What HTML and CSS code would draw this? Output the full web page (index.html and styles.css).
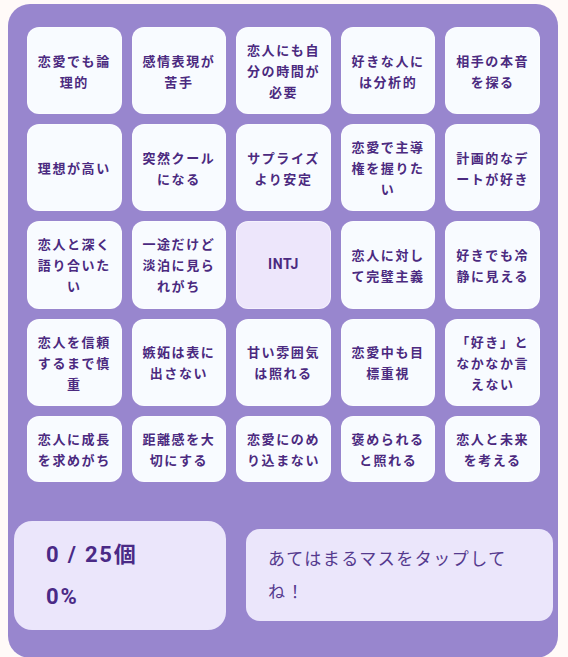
FILE: index.html
```html
<!DOCTYPE html>
<html lang="ja">
<head>
<meta charset="utf-8">
<title>INTJ 恋愛ビンゴ</title>
<link rel="stylesheet" href="styles.css">
</head>
<body>
<div class="board">
  <div class="grid">
    <div class="cell">恋愛でも論理的</div>
    <div class="cell">感情表現が苦手</div>
    <div class="cell">恋人にも自分の時間が必要</div>
    <div class="cell">好きな人には分析的</div>
    <div class="cell">相手の本音を探る</div>
    <div class="cell">理想が高い</div>
    <div class="cell">突然クールになる</div>
    <div class="cell">サプライズより安定</div>
    <div class="cell">恋愛で主導権を握りたい</div>
    <div class="cell">計画的なデートが好き</div>
    <div class="cell">恋人と深く語り合いたい</div>
    <div class="cell">一途だけど淡泊に見られがち</div>
    <div class="cell center">INTJ</div>
    <div class="cell">恋人に対して完璧主義</div>
    <div class="cell">好きでも冷静に見える</div>
    <div class="cell">恋人を信頼するまで慎重</div>
    <div class="cell">嫉妬は表に出さない</div>
    <div class="cell">甘い雰囲気は照れる</div>
    <div class="cell">恋愛中も目標重視</div>
    <div class="cell">「好き」となかなか言えない</div>
    <div class="cell">恋人に成長を求めがち</div>
    <div class="cell">距離感を大切にする</div>
    <div class="cell">恋愛にのめり込まない</div>
    <div class="cell">褒められると照れる</div>
    <div class="cell">恋人と未来を考える</div>
  </div>
  <div class="footer">
    <div class="stats">
      <div class="count">0 / 25個</div>
      <div class="percent">0%</div>
    </div>
    <div class="message">あてはまるマスをタップしてね！</div>
  </div>
</div>
</body>
</html>
```
FILE: styles.css
```css
html, body {
  margin: 0;
  padding: 0;
}
body {
  background: #fffaf8;
  padding: 4px 10px 0 8px;
  font-family: "Noto Sans CJK JP", "Noto Sans", sans-serif;
}
.board {
  width: 550px;
  background: #9886ce;
  border-radius: 22px;
  padding: 23px 0 28px 0;
  box-sizing: border-box;
}
.grid {
  display: grid;
  grid-template-columns: repeat(5, 1fr);
  gap: 10px;
  padding: 0 18px 0 19px;
}
.cell {
  background: #f8fbff;
  border: 1.5px solid rgba(255, 255, 255, 0.45);
  border-radius: 12px;
  padding: 11.1px 6px;
  display: flex;
  align-items: center;
  justify-content: center;
  text-align: center;
  color: #4b2a80;
  font-size: 13px;
  font-weight: 700;
  line-height: 21px;
  letter-spacing: 1.6px;
}
.cell.center {
  background: #ede6fb;
  font-family: Roboto, "Noto Sans CJK JP", sans-serif;
  font-size: 14px;
  letter-spacing: 0.5px;
}
.footer {
  display: flex;
  align-items: center;
  gap: 20px;
  padding: 0 5px 0 6px;
  margin-top: 39px;
}
.stats {
  width: 212px;
  box-sizing: border-box;
  background: #ebe6fb;
  border-radius: 18px;
  padding: 18px 32px 17px 32px;
  color: #4a2a86;
  font-family: Roboto, "Noto Sans CJK JP", sans-serif;
  font-weight: 700;
  font-size: 22px;
  line-height: 32px;
  letter-spacing: 1.8px;
}
.percent {
  margin-top: 10px;
}
.message {
  flex: 1;
  background: #ebe6fb;
  border-radius: 14px;
  padding: 12px 24px 14px 22px;
  color: #553a8e;
  font-size: 17px;
  line-height: 33px;
  letter-spacing: 1.5px;
}
```
